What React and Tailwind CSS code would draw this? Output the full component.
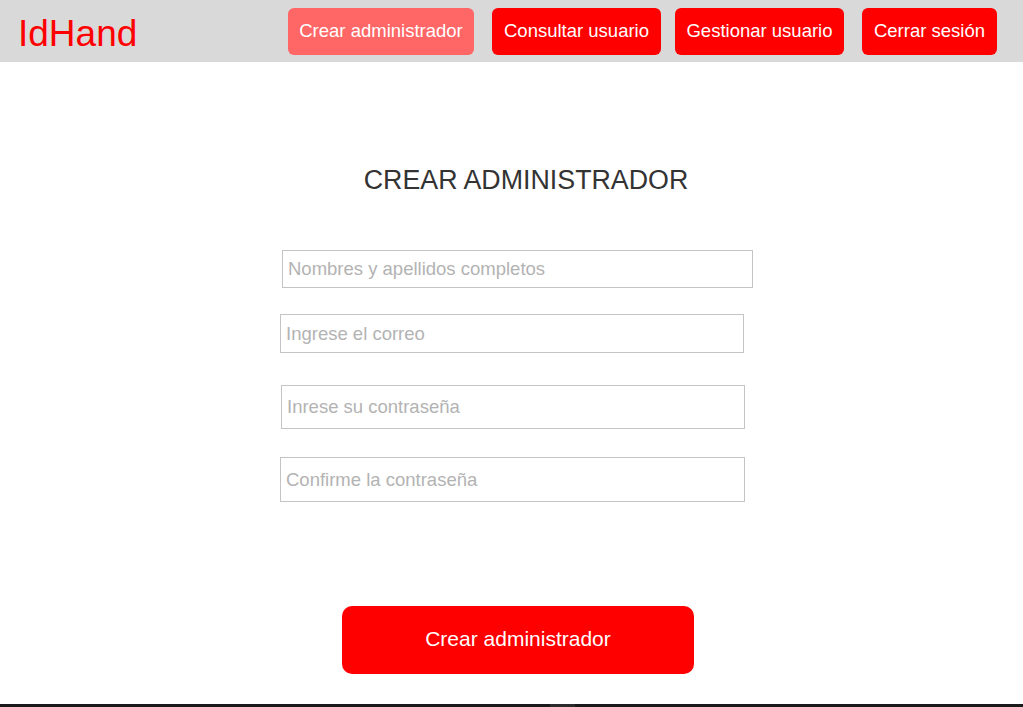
export default function App() {
  return (
    <div className="min-h-[707px] bg-white flex flex-col" style={{ fontFamily: '"Liberation Sans", Arial, sans-serif' }}>
      {/* Header */}
      <header className="h-[62px] bg-[#d9d9d9] flex items-start">
        <div className="pl-[18px] pt-[12px] text-[37px] leading-[44px] text-[#ff0000]">IdHand</div>
        <nav className="ml-auto pr-[26px] pt-[8px] flex">
          <button className="h-[47px] w-[186px] rounded-[6px] bg-[#ff6666] pb-[2px] text-white text-[18.5px]">
            Crear administrador
          </button>
          <button className="ml-[18px] h-[47px] w-[169px] rounded-[6px] bg-[#ff0000] pb-[2px] text-white text-[18.5px]">
            Consultar usuario
          </button>
          <button className="ml-[14px] h-[47px] w-[169px] rounded-[6px] bg-[#ff0000] pb-[2px] text-white text-[18.5px]">
            Gestionar usuario
          </button>
          <button className="ml-[18px] h-[47px] w-[135px] rounded-[6px] bg-[#ff0000] pb-[2px] text-white text-[18.5px]">
            Cerrar sesión
          </button>
        </nav>
      </header>

      {/* Form */}
      <main className="flex-1 flex flex-col">
        <h1 className="mt-[101px] pl-[29px] text-center text-[26.8px] leading-[34px] text-[#333333]">
          CREAR ADMINISTRADOR
        </h1>

        <div className="mt-[53px] pl-[280px] flex flex-col items-start">
          <input
            placeholder="Nombres y apellidos completos"
            className="ml-[2px] h-[38px] w-[471px] border border-[#c4c4c4] px-[5px] text-[18.5px] outline-none placeholder:text-[#b3b3b3]"
          />
          <input
            placeholder="Ingrese el correo"
            className="mt-[26px] h-[39px] w-[464px] border border-[#c4c4c4] px-[5px] text-[18.5px] outline-none placeholder:text-[#b3b3b3]"
          />
          <input
            placeholder="Inrese su contraseña"
            className="mt-[32px] ml-[1px] h-[44px] w-[464px] border border-[#c4c4c4] px-[5px] text-[18.5px] outline-none placeholder:text-[#b3b3b3]"
          />
          <input
            placeholder="Confirme la contraseña"
            type="password"
            className="mt-[28px] h-[45px] w-[465px] border border-[#c4c4c4] px-[5px] text-[18.5px] outline-none placeholder:text-[#b3b3b3]"
          />
        </div>

        <div className="mt-[104px] pl-[342px]">
          <button className="h-[68px] w-[352px] rounded-[10px] bg-[#ff0000] pb-[3px] text-white text-[21px]">
            Crear administrador
          </button>
        </div>

        <div className="flex-1" />
      </main>

      {/* Footer edge */}
      <div className="h-[3px] bg-[#1a1a1a] flex">
        <div className="ml-[550px] w-[25px] bg-[#2b2b2b]" />
      </div>
    </div>
  );
}
